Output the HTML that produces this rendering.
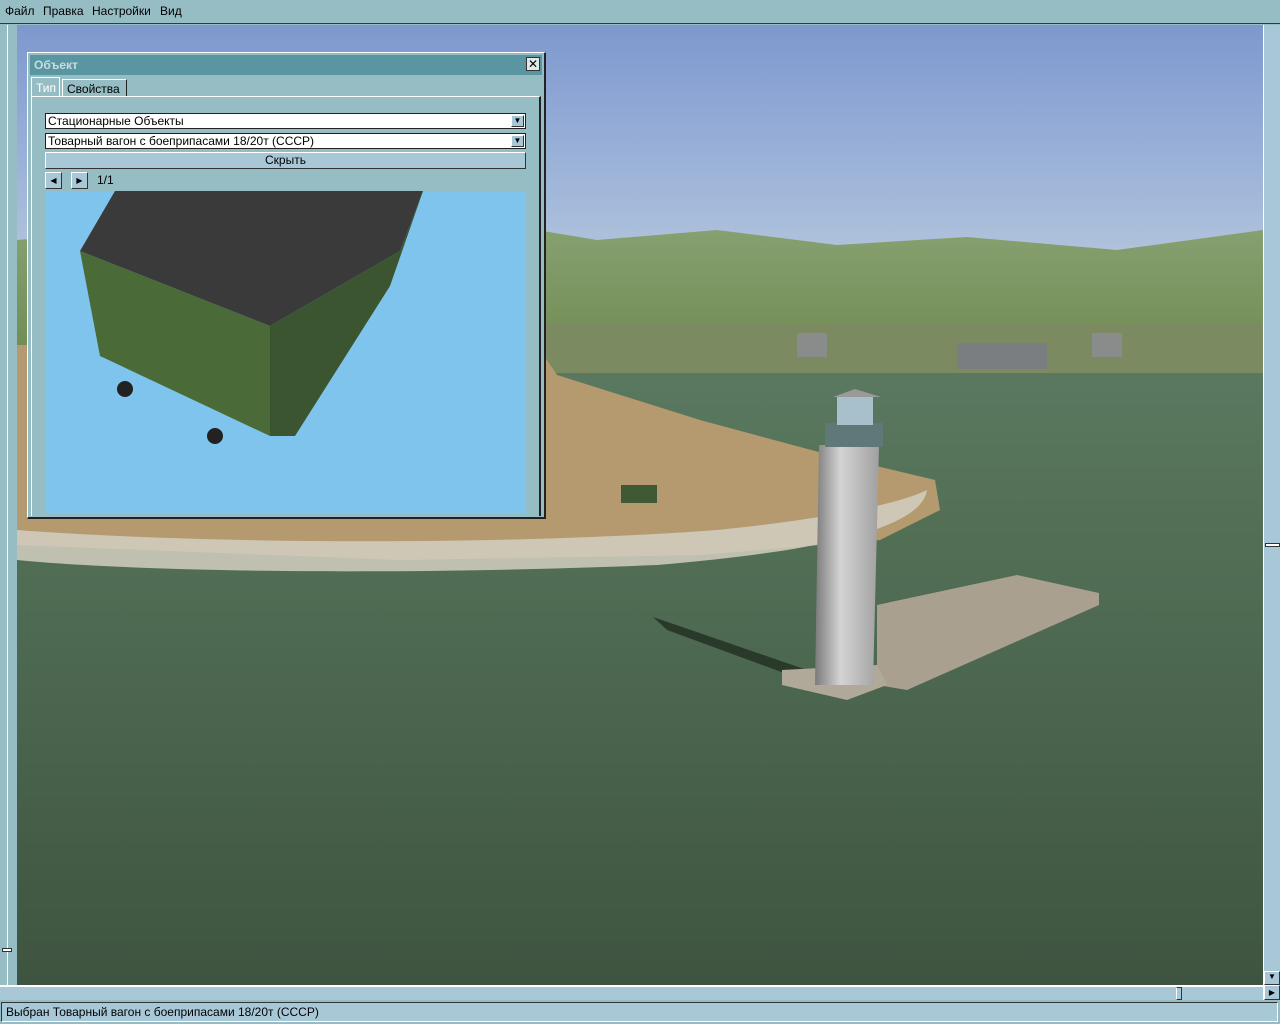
<!DOCTYPE html>
<html><head><meta charset="utf-8"><style>
*{margin:0;padding:0;box-sizing:border-box}
body{width:1280px;height:1024px;overflow:hidden;background:#96bcc4;font-family:"Liberation Sans","DejaVu Sans",sans-serif;font-size:12px;color:#000;position:relative}
.abs{position:absolute}
#menu{left:0;top:0;width:1280px;height:24px;background:#96bcc4;border-bottom:1px solid #20404a}
#menu span{position:absolute;top:4px}
#scene{left:17px;top:25px;width:1246px;height:960px;overflow:hidden;background:#1c2a20}
#vs{left:1263px;top:25px;width:17px;height:975px;background:#a8c8d8;border-left:1px solid #fff}
#hs{left:0;top:985px;width:1263px;height:15px;background:#a8c8d8;border-top:2px solid #fff}
#status{left:0;top:1000px;width:1280px;height:24px;background:#96bcc4}
.btn{background:#a8c8d8;border:1px solid #fff;border-right-color:#333;border-bottom-color:#333}
#dlg{left:27px;top:52px;width:519px;height:467px;background:#96bcc4;border:1px solid #fff;border-right:2px solid #222;border-bottom:2px solid #222}
</style></head><body>
<div id="menu" class="abs"><span style="left:5px">Файл</span><span style="left:43px">Правка</span><span style="left:92px">Настройки</span><span style="left:160px">Вид</span></div>
<div class="abs" style="left:0;top:25px;width:17px;height:960px;background:#96bcc4"></div>
<div class="abs" style="left:7px;top:25px;width:1px;height:960px;background:#fff"></div>
<div class="abs" style="left:2px;top:948px;width:10px;height:4px;background:#fff;border:1px solid #333"></div>
<div id="scene" class="abs">
<svg width="1246" height="960" viewBox="0 0 1246 960">
<defs>
<linearGradient id="sky" x1="0" y1="0" x2="0" y2="1"><stop offset="0" stop-color="#7e98cf"/><stop offset="0.6" stop-color="#a4badb"/><stop offset="1" stop-color="#c4d0dc"/></linearGradient>
<linearGradient id="sea" x1="0" y1="0" x2="0" y2="1"><stop offset="0" stop-color="#6a8a7a"/><stop offset="0.45" stop-color="#56745a"/><stop offset="1" stop-color="#3e5440"/></linearGradient>
<linearGradient id="tw" x1="0" y1="0" x2="1" y2="0"><stop offset="0" stop-color="#7a7a7a"/><stop offset="0.4" stop-color="#d4d4d4"/><stop offset="1" stop-color="#a0a0a0"/></linearGradient>
<linearGradient id="hill" x1="0" y1="0" x2="0" y2="1"><stop offset="0" stop-color="#86a070"/><stop offset="1" stop-color="#6e8a4e"/></linearGradient>
</defs>
<rect width="1246" height="960" fill="url(#sea)"/>
<rect width="1246" height="300" fill="url(#sky)"/>
<path d="M0 215 L120 205 L300 215 L520 205 L580 215 L700 205 L820 220 L950 212 L1100 225 L1246 205 L1246 345 L0 345Z" fill="url(#hill)"/>
<rect x="520" y="298" width="726" height="50" fill="#7c8a62"/>
<rect x="780" y="308" width="30" height="24" fill="#8a8c8c"/><rect x="1075" y="308" width="30" height="24" fill="#8a8c8c"/><rect x="940" y="318" width="90" height="26" fill="#7a7e80"/>
<path d="M0 320 L520 320 L540 350 L683 395 L813 430 L918 455 L923 485 L863 515 L683 530 L383 535 L0 520Z" fill="#b49a6e"/>
<path d="M0 505 C200 520 500 520 700 505 C800 495 880 480 910 465 C905 500 820 525 640 540 C340 552 100 545 0 535Z" fill="#d4cfc2" opacity="0.85"/>
<path d="M636 592 L790 645 L800 660 L650 605Z" fill="#2a3a2a"/>
<path d="M860 580 L1000 550 L1082 568 L1082 580 L890 665 L860 660Z" fill="#aaa090"/>
<path d="M765 645 L860 640 L870 660 L830 675 L765 660Z" fill="#b0a898"/>
<path d="M802 420 L862 420 L856 660 L798 660Z" fill="url(#tw)"/>
<rect x="808" y="398" width="58" height="24" fill="#607878"/>
<rect x="820" y="372" width="36" height="28" fill="#a8c0cc"/>
<path d="M816 372 L838 364 L864 372Z" fill="#9a9a9a"/>
<rect x="604" y="460" width="36" height="18" fill="#3e5a34"/>
</svg>
</div>
<div id="vs" class="abs"><div class="abs" style="left:1px;top:518px;width:15px;height:4px;background:#fff;border:1px solid #333"></div><div class="btn abs" style="left:0;top:946px;width:16px;height:14px;font-size:8px;text-align:center">▼</div></div>
<div id="hs" class="abs"><div class="abs" style="left:1176px;top:0;width:6px;height:13px;border:1px solid #333;border-left-color:#fff;background:#a8c8d8"></div></div>
<div class="btn abs" style="left:1264px;top:985px;width:16px;height:15px;font-size:8px;text-align:center;line-height:13px">▶</div>
<div id="status" class="abs"><div class="abs" style="left:1px;top:2px;width:1277px;height:20px;border:1px solid #fff;border-left-color:#333;border-top-color:#333;background:#a8c8d8;padding:2px 4px">Выбран Товарный вагон с боеприпасами 18/20т (СССР)</div></div>
<div id="dlg" class="abs">
<div class="abs" style="left:2px;top:2px;width:512px;height:20px;background:#5a96a2;color:#c8dce0;font-weight:bold;font-size:12px;padding:3px 4px">Объект
<div class="abs" style="right:2px;top:2px;width:14px;height:14px;background:#e0e8e8;border:1px solid #333;color:#000;font-size:12px;line-height:12px;text-align:center">✕</div></div>
<div class="abs" style="left:3px;top:24px;width:29px;height:20px;border:1px solid #fff;border-bottom:none;padding:3px 4px;color:#fff;background:#96bcc4">Тип</div>
<div class="abs" style="left:34px;top:26px;width:65px;height:18px;border:1px solid #fff;border-right-color:#222;border-bottom:none;padding:2px 4px">Свойства</div>
<div class="abs" style="left:3px;top:43px;width:510px;height:420px;border-top:1px solid #fff;border-right:2px solid #222;border-left:1px solid #fff"></div>
<div class="abs" style="left:17px;top:60px;width:481px;height:16px;background:#fff;border:1px solid #222;padding:0 2px;line-height:14px">Стационарные Объекты<div class="btn abs" style="right:1px;top:1px;width:13px;height:12px;font-size:8px;text-align:center;line-height:10px">▼</div></div>
<div class="abs" style="left:17px;top:80px;width:481px;height:16px;background:#fff;border:1px solid #222;padding:0 2px;line-height:14px">Товарный вагон с боеприпасами 18/20т (СССР)<div class="btn abs" style="right:1px;top:1px;width:13px;height:12px;font-size:8px;text-align:center;line-height:10px">▼</div></div>
<div class="btn abs" style="left:17px;top:99px;width:481px;height:17px;text-align:center;line-height:15px">Скрыть</div>
<div class="btn abs" style="left:17px;top:119px;width:17px;height:17px;font-size:8px;text-align:center;line-height:15px">◀</div>
<div class="btn abs" style="left:43px;top:119px;width:17px;height:17px;font-size:8px;text-align:center;line-height:15px">▶</div>
<div class="abs" style="left:69px;top:120px">1/1</div>
<div class="abs" style="left:17px;top:138px;width:481px;height:323px;background:#7ec4ec;overflow:hidden">
<svg width="481" height="323"><path d="M70 0 L378 0 L355 60 L225 135 L35 60Z" fill="#3a3a3a"/>
<path d="M35 60 L225 135 L225 245 L55 165Z" fill="#4a6a38"/>
<path d="M225 135 L355 60 L378 0 L345 95 L250 245 L225 245Z" fill="#3a5530"/>
<circle cx="80" cy="198" r="8" fill="#222"/><circle cx="170" cy="245" r="8" fill="#222"/></svg>
</div>
</div>
</body></html>
